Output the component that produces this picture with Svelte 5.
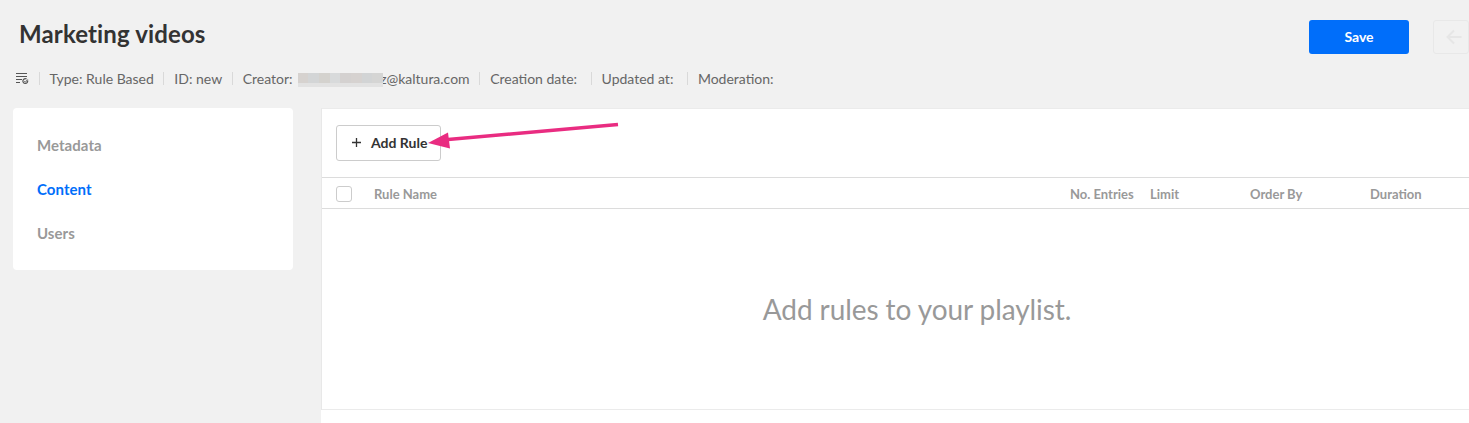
<script lang="ts">
	const metaItems = ['Type: Rule Based', 'ID: new', 'Creator', 'Creation date:', 'Updated at:', 'Moderation:'];
	const navItems = ['Metadata', 'Content', 'Users'];
	const blurBlocks = ['#d6d2cf', '#d3d5d6', '#d4d2ce', '#d8dadb', '#d4d1d0', '#d6d2d0', '#d2d4d5', '#d5d5d4'];
</script>

<div class="page">
	<header class="top">
		<h1 class="title">Marketing videos</h1>
		<div class="actions">
			<button class="save">Save</button>
			<button class="back" aria-label="Back">
				<svg width="18" height="18" viewBox="0 0 18 18" fill="none" stroke="currentColor" stroke-width="2">
					<path d="M16.5 9H2.5M9 2.5 2.5 9 9 15.5" />
				</svg>
			</button>
		</div>
	</header>

	<div class="meta">
		<svg class="meta-icon" width="14" height="14" viewBox="0 0 14 14" fill="none" stroke="currentColor" stroke-width="1.2">
			<path d="M1 2.5h11M1 5.5h11M1 8.5h6M1 11.5h4" />
			<path d="M12.6 9.5a2.4 2.4 0 1 1-1-1.4" />
			<path d="M9.3 10.3l1 1 2.4-2.8" stroke-width="1" />
		</svg>
		{#each metaItems as item}
			<span class="sep"></span>
			{#if item === 'Creator'}
				<span class="creator">Creator: <span class="blur">{#each blurBlocks as c}<i style="background:{c}"></i>{/each}</span>z@kaltura.com</span>
			{:else}
				<span class:no-value={item === 'Creation date:' || item === 'Updated at:'}>{item}</span>
			{/if}
		{/each}
	</div>

	<div class="body">
		<nav class="side">
			{#each navItems as item}
				<span class="nav-item" class:active={item === 'Content'}>{item}</span>
			{/each}
		</nav>

		<section class="panel">
			<div class="toolbar">
				<button class="add">
					<svg width="11" height="11" viewBox="0 0 11 11" stroke="currentColor" stroke-width="1.3">
						<path d="M5.5 1v9M1 5.5h9" />
					</svg>
					Add Rule
				</button>
			</div>
			<div class="thead">
				<span class="check"></span>
				<span class="name">Rule Name</span>
				<span class="entries">No. Entries</span>
				<span class="limit">Limit</span>
				<span class="order">Order By</span>
				<span class="duration">Duration</span>
			</div>
			<div class="empty">Add rules to your playlist.</div>
			<div class="foot"></div>

			<svg class="arrow" width="195" height="30" viewBox="0 0 195 30">
				<path d="M191 2.5 21 17.5" stroke="#e92c81" stroke-width="3.6" fill="none" />
				<path d="M1 21 21 10.5 23 26.5Z" fill="#e92c81" />
			</svg>
		</section>
	</div>
</div>

<style>
	:global(body) {
		margin: 0;
		background: #f1f1f1;
		overflow: hidden;
	}

	.page {
		height: 423px;
		font-family: Lato, sans-serif;
		color: #333;
		overflow: hidden;
	}

	.top {
		display: flex;
		justify-content: space-between;
		align-items: flex-start;
		height: 65px;
		padding: 20px 0 0 19px;
		box-sizing: border-box;
		width: 1500px;
	}

	.title {
		margin: 0;
		font-size: 24px;
		line-height: 28px;
		font-weight: 700;
		letter-spacing: 0.13px;
		color: #333;
	}

	.actions {
		display: flex;
		gap: 24px;
		margin-right: 31px;
	}

	.save {
		width: 100px;
		height: 34px;
		padding: 0 0 2px;
		border: none;
		border-radius: 3px;
		background: #006efa;
		color: white;
		font: 700 14px Lato, sans-serif;
	}

	.back {
		width: 36px;
		height: 34px;
		padding: 0 0 0 11px;
		display: flex;
		align-items: center;
		border: 1px solid #e8e8e8;
		border-radius: 3px;
		background: transparent;
		color: #e6e6e6;
		box-sizing: border-box;
	}

	.meta {
		display: flex;
		align-items: center;
		height: 26px;
		padding-left: 15px;
		font-size: 14px;
		color: #666;
		white-space: nowrap;
	}

	.meta-icon {
		margin-right: 9.5px;
		color: #555;
	}

	.sep {
		width: 1px;
		height: 13px;
		background: #d9d9d9;
		margin-right: 10px;
	}

	.meta span:not(.sep):not(.blur) {
		margin-right: 9.5px;
	}

	.meta span.no-value:not(.sep) {
		margin-right: 13.5px;
	}

	.blur {
		position: relative;
		z-index: 1;
		display: inline-flex;
		vertical-align: -3px;
		margin-left: 1.5px;
		margin-right: -3px;
	}

	.blur i {
		display: block;
		width: 10.7px;
		height: 10px;
		border-bottom: 4px solid #e2e2e2;
	}

	.body {
		display: flex;
		margin-top: 17px;
		padding-left: 13px;
		gap: 28px;
	}

	.side {
		width: 280px;
		height: 162px;
		padding: 15px 24px;
		box-sizing: border-box;
		display: flex;
		flex-direction: column;
		gap: 0;
		background: white;
		border-radius: 4px;
		flex-shrink: 0;
	}

	.nav-item {
		height: 44px;
		line-height: 44px;
		font-size: 15px;
		font-weight: 700;
		letter-spacing: 0.05px;
		color: #999;
	}

	.nav-item.active {
		color: #006efa;
	}

	.panel {
		position: relative;
		flex: 1;
		background: white;
		border-left: 1px solid #e8e8e8;
		border-top: 1px solid #ebebeb;
		height: 320px;
	}

	.toolbar {
		height: 69px;
		padding: 16px 0 0 14px;
		box-sizing: border-box;
		border-bottom: 1px solid #dcdcdc;
	}

	.add {
		width: 105px;
		height: 36px;
		display: flex;
		align-items: center;
		gap: 9px;
		padding: 0 0 2px 14px;
		box-sizing: border-box;
		background: white;
		border: 1px solid #ccc;
		border-radius: 3px;
		color: #333;
		font: 700 14px Lato, sans-serif;
		white-space: nowrap;
	}

	.thead {
		position: relative;
		display: flex;
		align-items: center;
		box-sizing: border-box;
		height: 31px;
		border-bottom: 1px solid #dcdcdc;
		font-size: 13px;
		font-weight: 700;
		color: #999;
		padding: 2px 0 0 14px;
	}

	.check {
		width: 16px;
		height: 16px;
		border: 1px solid #ccc;
		border-radius: 3px;
		flex-shrink: 0;
		box-sizing: border-box;
	}

	.name {
		margin-left: 22px;
		width: 696px;
		flex-shrink: 0;
	}

	.entries {
		width: 80px;
		flex-shrink: 0;
	}

	.limit {
		width: 100px;
		flex-shrink: 0;
	}

	.order {
		width: 120px;
		flex-shrink: 0;
	}

	.empty {
		height: 201px;
		display: flex;
		align-items: center;
		justify-content: center;
		font-size: 28px;
		letter-spacing: -0.08px;
		color: #999;
		width: 1190px;
		box-sizing: border-box;
		border-bottom: 1px solid #ebebeb;
	}

	.foot {
		height: 20px;
		margin-left: -1px;
		background: white;
	}

	.arrow {
		position: absolute;
		left: 105px;
		top: 13px;
	}
</style>
